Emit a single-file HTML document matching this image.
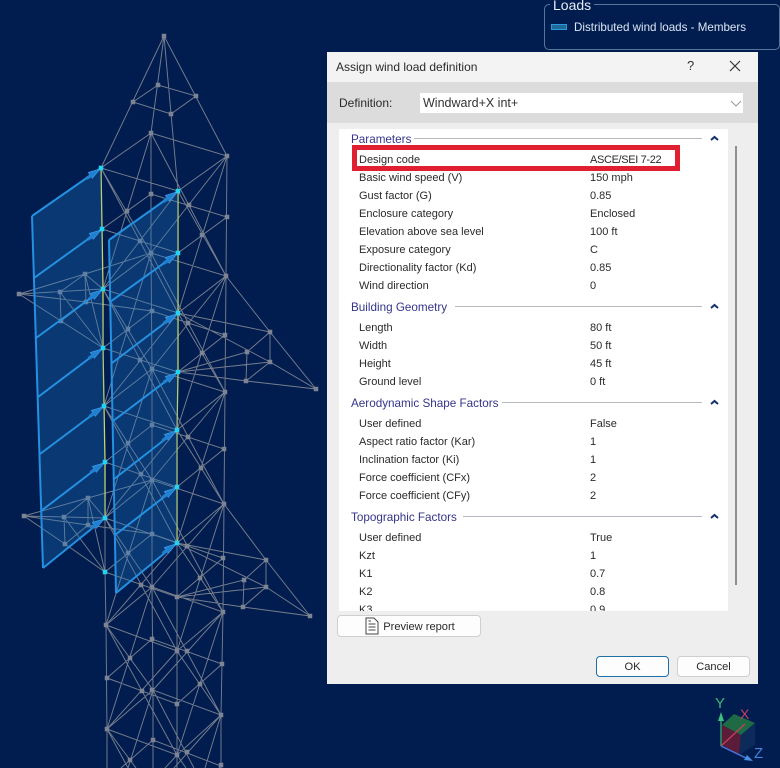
<!DOCTYPE html>
<html><head><meta charset="utf-8"><style>
html,body{margin:0;padding:0;width:780px;height:768px;overflow:hidden;background:#011d50}
body{font-family:"Liberation Sans",sans-serif;font-size:11px;color:#2a2a2a;position:relative}
svg{position:absolute;left:0;top:0}
.a{position:absolute;white-space:nowrap;line-height:14px}
.k{position:absolute;white-space:nowrap;line-height:14px;margin-top:1px}
.v{position:absolute;white-space:nowrap;line-height:14px;margin-top:1px}
.h{position:absolute;color:#35358a;font-size:11.7px;white-space:nowrap;line-height:14px;margin-top:1px}
.l{position:absolute;height:1px;background:#b4b8c0}
.btn{position:absolute;background:#fdfdfd;border:1px solid #cfcfcf;border-radius:4px;box-sizing:border-box;text-align:center;font-size:11.1px}
</style></head><body>
<svg width="780" height="768" viewBox="0 0 780 768">
<defs><g id="ar"><path d="M-1 1L-12.7 4.5L-8.7 10.3Z" fill="#1f7fd0" stroke="#3a9ce8" stroke-width=".7"/><path d="M-10.5 6L-15 9.2L-13.5 11.5L-9 8.5Z" fill="#1f7fd0" stroke="#2a86cf" stroke-width=".5"/></g></defs>
<path fill="none" stroke="#767e8c" stroke-width=".95" d="M164 36L101 168M164 36L151 133M164 36L178 191M164 36L227 156M133 102L158 85L196 96L171 114Z
M101 168L178 191L227 156L151 133ZM102 229L178 253L227 217L151 194ZM103 289L178 313L226 276L151 253ZM103 348L178 372L225 335L152 311ZM104 406L177 430L225 392L152 369ZM105 462L177 487L224 449L152 425ZM105 518L177 543L224 504L152 480ZM105 572L177 597L223 558L152 534ZM106 625L177 651L223 612L152 587ZM107 678L177 704L222 664L152 639ZM107 729L177 755L221 715L153 690Z
M121 768L153 740L221 766L219 768
M151 133L151 253L152 369L152 480L152 587L153 690L153 768M227 156L226 276L225 392L224 504L223 612L221 715L221 768M105 518L105 572L106 625L107 729L107 768M177 543L177 768
M101 168L151 253M151 133L103 289M101 168L178 313M178 191L103 289M178 191L226 276M227 156L178 313M151 133L226 276M227 156L151 253
M103 289L152 369M151 253L104 406M103 289L177 430M178 313L104 406M178 313L225 392M226 276L177 430M151 253L225 392M226 276L152 369
M104 406L152 480M152 369L105 518M104 406L177 543M177 430L105 518M177 430L224 504M225 392L177 543M152 369L224 504M225 392L152 480
M105 518L152 587M152 480L106 625M105 518L177 651M177 543L106 625M177 543L223 612M224 504L177 651M152 480L223 612M224 504L152 587
M106 625L153 690M152 587L107 729M106 625L177 755M177 651L107 729M177 651L221 715M223 612L177 755M152 587L221 715M223 612L153 690
M107 729L136 768M153 690L128 768M107 729L128 768M177 755L165 768M177 755L186 768M221 715L205 768M153 690L194 768M221 715L174 768
M226 276L270 332L316 389M178 313L270 332M178 372L247 352L270 332M247 352L246 381L270 362M270 332L270 362M246 381L316 389M178 372L246 381M178 372L270 362M178 313L270 362L316 389
M224 504L266 560L310 616M177 543L266 560M177 597L244 580L266 560M244 580L243 607L266 587M266 560L266 587M243 607L310 616M177 597L243 607M177 597L266 587M177 543L266 587L310 616
M19 294L85 274L151 253M19 294L103 289M19 294L86 302M19 294L61 321L103 348M60 292L61 321M60 292L85 274M85 274L86 302L61 321M85 274L103 289M85 274L103 348M60 292L103 348M86 302L152 311
M24 516L88 498L152 480M24 516L105 518M24 516L88 525M24 516L65 544L105 572M64 517L65 544M64 517L88 498M88 498L88 525L65 544M88 498L105 518M88 498L105 572M64 517L105 572M88 525L152 534"/>
<path fill="none" stroke="#c9d66a" stroke-width="1.3" d="M101 168L102 229L103 289L103 348L104 406L105 462L105 518M178 191L178 253L178 313L178 372L177 430L177 487L177 543"/>
<path fill="none" stroke="#7c8494" stroke-width="4.5" stroke-linecap="square" d="M164 36h0M133 102h0M158 85h0M196 96h0M171 114h0M151 133h0M227 156h0M151 194h0M227 217h0M127 211h0M189 205h0M202 235h0M140 241h0M151 253h0M226 276h0M152 311h0M188 323h0M225 335h0M270 332h0M247 352h0M270 362h0M246 381h0M316 389h0M202 353h0M19 294h0M85 274h0M60 292h0M61 321h0M86 302h0M128 329h0M140 360h0M152 369h0M225 392h0M152 425h0M188 437h0M224 449h0M128 443h0M141 474h0M152 480h0M201 468h0M224 504h0M187 546h0M152 534h0M223 558h0M266 560h0M244 580h0M266 587h0M243 607h0M310 616h0M24 516h0M88 498h0M64 517h0M88 525h0M65 544h0M128 553h0M141 585h0M152 587h0M177 597h0M200 578h0M223 612h0M106 625h0M152 639h0M130 658h0M187 651h0M177 651h0M222 664h0M107 678h0M142 691h0M152 690h0M200 684h0M177 704h0M221 715h0M107 729h0M153 740h0M130 760h0M187 752h0M177 755h0M221 765h0"/>
<g fill="#1f78c8" fill-opacity=".3">
<path d="M32 216L101 168L105 518L43 568Z"/>
<path d="M109 240L178 191L177 543L116 593Z"/>
</g>
<path fill="none" stroke="#2490e0" stroke-width="2" d="M32 216L43 568M109 240L116 593M32 216L101 168M34 278L102 229M36 338L103 289M38 397L103 348M40 454L104 406M41 511L105 462M43 568L105 518M109 240L178 191M110 302L178 253M112 363L178 313M113 421L178 372M114 479L177 430M115 535L177 487M116 593L177 543"/>
<use href="#ar" x="101" y="168"/><use href="#ar" x="102" y="229"/><use href="#ar" x="103" y="289"/><use href="#ar" x="103" y="348"/><use href="#ar" x="104" y="406"/><use href="#ar" x="105" y="462"/><use href="#ar" x="105" y="518"/>
<use href="#ar" x="178" y="191"/><use href="#ar" x="178" y="253"/><use href="#ar" x="178" y="313"/><use href="#ar" x="178" y="372"/><use href="#ar" x="177" y="430"/><use href="#ar" x="177" y="487"/><use href="#ar" x="177" y="543"/>
<path fill="none" stroke="#22d4f2" stroke-width="4.5" stroke-linecap="square" d="M101 168h0M178 191h0M102 229h0M178 253h0M103 289h0M178 313h0M103 348h0M178 372h0M104 406h0M177 430h0M105 462h0M177 487h0M105 518h0M177 543h0M105 572h0"/>
<!-- triad -->
<path fill="#1d6a44" d="M734 714L755 723L741 735L722 725Z"/>
<path fill="#5a1c38" d="M722 725L741 735L739 755L722 745Z"/>
<path fill="#0c2a5a" d="M741 735L755 723L755 745L739 755Z"/>
<path fill="none" stroke="#3fa86a" stroke-width="1.3" d="M721 746V716"/>
<path fill="#3fc078" d="M721 712l-3 9h6Z"/>
<path fill="none" stroke="#c8405a" stroke-width="1.2" d="M721 746L745 724"/>
<path fill="none" stroke="#4a78d8" stroke-width="1.4" d="M721 746L748 759"/>
<path fill="#4a8ce0" d="M753 761l-9-1 3-5Z"/>
<text x="715" y="708" font-size="15" fill="#3fb878" font-family="Liberation Sans">Y</text>
<text x="740" y="719" font-size="14" fill="#c8405a" font-family="Liberation Sans">X</text>
<text x="754" y="758" font-size="15" fill="#4a80d8" font-family="Liberation Sans">Z</text>
</svg>

<!-- legend -->
<div style="position:absolute;left:544px;top:4px;width:234px;height:44px;border:1px solid #53769a;border-radius:5px"></div>
<div class="a" style="left:550px;top:-2px;background:#011d50;padding:0 3px;font-size:14px;line-height:15px;color:#e6ecf4">Loads</div>
<div style="position:absolute;left:551px;top:24px;width:16px;height:6px;background:#1e6a9a;border:1px solid #2c9ad8;box-sizing:border-box"></div>
<div class="a" style="left:574px;top:21px;color:#dde6f2;font-size:11.6px">Distributed wind loads - Members</div>

<!-- dialog -->
<div style="position:absolute;left:327px;top:52px;width:431px;height:632px;background:#eeeeee;overflow:hidden">
 <div style="position:absolute;left:0;top:0;width:431px;height:30px;background:#f3f3f3"></div>
 <div class="a" style="left:9px;top:8px;font-size:12px">Assign wind load definition</div>
 <div class="a" style="left:360px;top:7px;font-size:13px;color:#333">?</div>
 <svg width="431" height="30" style="left:0;top:0"><path d="M403 9L413 19M413 9L403 19" stroke="#333" stroke-width="1.2" fill="none"/></svg>
 <div style="position:absolute;left:0;top:30px;width:431px;height:41px;background:#dcdcdc"></div>
 <div class="a" style="left:12px;top:44px;font-size:12px">Definition:</div>
 <div style="position:absolute;left:93px;top:41px;width:323px;height:20px;background:#fff"></div>
 <div class="a" style="left:96px;top:44px;font-size:12.5px;color:#333">Windward+X int+</div>
 <svg width="431" height="80" style="left:0;top:0"><path d="M404 49L409 54L414 49" stroke="#999" fill="none"/></svg>

 <div style="position:absolute;left:12px;top:77px;width:389px;height:482px;background:#fff;overflow:hidden">
  <div class="h" style="top:3px;left:12px">Parameters</div><div class="l" style="left:75px;width:288px;top:9px"></div>
  <div style="position:absolute;left:13px;top:16px;width:328px;height:26px;box-sizing:border-box;border:5px solid #e02030"></div>
  <div class="k" style="left:20px;top:23px">Design code</div><div class="v" style="left:251px;top:23px;letter-spacing:-.35px">ASCE/SEI 7-22</div>
  <div class="k" style="left:20px;top:41px">Basic wind speed (V)</div><div class="v" style="left:251px;top:41px">150 mph</div>
  <div class="k" style="left:20px;top:59px">Gust factor (G)</div><div class="v" style="left:251px;top:59px">0.85</div>
  <div class="k" style="left:20px;top:77px">Enclosure category</div><div class="v" style="left:251px;top:77px">Enclosed</div>
  <div class="k" style="left:20px;top:95px">Elevation above sea level</div><div class="v" style="left:251px;top:95px">100 ft</div>
  <div class="k" style="left:20px;top:113px">Exposure category</div><div class="v" style="left:251px;top:113px">C</div>
  <div class="k" style="left:20px;top:131px">Directionality factor (Kd)</div><div class="v" style="left:251px;top:131px">0.85</div>
  <div class="k" style="left:20px;top:149px">Wind direction</div><div class="v" style="left:251px;top:149px">0</div>

  <div class="h" style="top:171px;left:12px">Building Geometry</div><div class="l" style="left:116px;width:247px;top:177px"></div>
  <div class="k" style="left:20px;top:191px">Length</div><div class="v" style="left:251px;top:191px">80 ft</div>
  <div class="k" style="left:20px;top:209px">Width</div><div class="v" style="left:251px;top:209px">50 ft</div>
  <div class="k" style="left:20px;top:227px">Height</div><div class="v" style="left:251px;top:227px">45 ft</div>
  <div class="k" style="left:20px;top:245px">Ground level</div><div class="v" style="left:251px;top:245px">0 ft</div>

  <div class="h" style="top:267px;left:12px">Aerodynamic Shape Factors</div><div class="l" style="left:163px;width:200px;top:273px"></div>
  <div class="k" style="left:20px;top:287px">User defined</div><div class="v" style="left:251px;top:287px">False</div>
  <div class="k" style="left:20px;top:305px">Aspect ratio factor (Kar)</div><div class="v" style="left:251px;top:305px">1</div>
  <div class="k" style="left:20px;top:323px">Inclination factor (Ki)</div><div class="v" style="left:251px;top:323px">1</div>
  <div class="k" style="left:20px;top:341px">Force coefficient (CFx)</div><div class="v" style="left:251px;top:341px">2</div>
  <div class="k" style="left:20px;top:359px">Force coefficient (CFy)</div><div class="v" style="left:251px;top:359px">2</div>

  <div class="h" style="top:381px;left:12px">Topographic Factors</div><div class="l" style="left:124px;width:239px;top:387px"></div>
  <div class="k" style="left:20px;top:401px">User defined</div><div class="v" style="left:251px;top:401px">True</div>
  <div class="k" style="left:20px;top:419px">Kzt</div><div class="v" style="left:251px;top:419px">1</div>
  <div class="k" style="left:20px;top:437px">K1</div><div class="v" style="left:251px;top:437px">0.7</div>
  <div class="k" style="left:20px;top:455px">K2</div><div class="v" style="left:251px;top:455px">0.8</div>
  <div class="k" style="left:20px;top:473px">K3</div><div class="v" style="left:251px;top:473px">0.9</div>

  <svg width="389" height="482" style="left:0;top:0"><path d="M372 11L375.500 8L379 11M372 179L375.500 176L379 179M372 275L375.500 272L379 275M372 389L375.500 386L379 389" stroke="#15306a" stroke-width="2" fill="none"/></svg>
 </div>
 <div style="position:absolute;left:408px;top:94px;width:2px;height:439px;background:#8f8f8f"></div>

 <div class="btn" style="left:10px;top:563px;width:144px;height:22px;line-height:23px;padding-left:20px">Preview report</div>
 <svg width="30" height="24" style="left:35px;top:563px"><path d="M4 3H12L16 7V19H4Z" fill="#fff" stroke="#444"/><path d="M6.500 9H13.500M6.500 12H13.500M6.500 15H13.500M6.500 6H9" stroke="#444" fill="none"/></svg>
 <div class="btn" style="left:269px;top:604px;width:73px;height:21px;line-height:21px;border-color:#1f6ea8">OK</div>
 <div class="btn" style="left:350px;top:604px;width:73px;height:21px;line-height:21px">Cancel</div>
</div>
</body></html>
